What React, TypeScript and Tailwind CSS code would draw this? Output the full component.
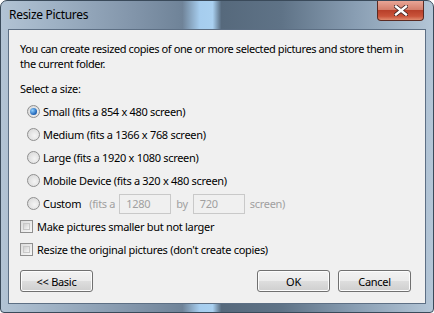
import React from 'react';

const font = { fontFamily: '"Noto Sans", "Segoe UI", sans-serif' };

function Radio({ checked, label, children }: { checked?: boolean; label: string; children?: React.ReactNode }) {
  return (
    <div className="flex items-center h-[23px] pl-[7px]">
      <span className="w-[13px] h-[13px] rounded-full border border-[#8f8f8f] bg-[radial-gradient(circle_at_60%_60%,#f4f4f4,#d4d4d4)] flex items-center justify-center">
        {checked && (
          <span className="w-[7px] h-[7px] rounded-full bg-[radial-gradient(circle_at_35%_35%,#8fd0ff,#1a5fb4_70%,#0d3a78)]" />
        )}
      </span>
      <span className="ml-[3px]">{label}</span>
      {children}
    </div>
  );
}

function Check({ label }: { label: string }) {
  return (
    <div className="flex items-center h-[23px]">
      <span className="w-[13px] h-[13px] border border-[#8f8f8f] bg-[linear-gradient(135deg,#dcdcdc,#f7f7f7)] p-[2px]">
        <span className="block w-full h-full border border-[#c8c8c8] bg-[linear-gradient(135deg,#d0d0d0,#f6f6f6)]" />
      </span>
      <span className="ml-[4px]">{label}</span>
    </div>
  );
}

function Button({ label, className }: { label: string; className?: string }) {
  return (
    <div
      className={
        'h-[22px] rounded-[3px] border border-[#707070] flex items-center justify-center bg-[linear-gradient(#f2f2f2_0%,#ebebeb_48%,#dddddd_52%,#cfcfcf_100%)] shadow-[inset_0_0_0_1px_#fcfcfc] ' +
        (className ?? '')
      }
    >
      {label}
    </div>
  );
}

export default function App() {
  return (
    <div className="w-[434px] h-[313px] bg-white tracking-[-0.3px]" style={font}>
      <div className="relative w-[434px] h-[313px] rounded-t-[7px] rounded-b-[4px] border border-[#3a4a5a] bg-[linear-gradient(90deg,#b2c3d4_0%,#9fb2c5_12%,#8396ab_30%,#6f8398_42%,#a6cdee_46%,#a9d0f0_49%,#56697c_51%,#5f7387_65%,#899eb3_82%,#b4c6d7_100%)] px-[7px] pb-[8px] flex flex-col">
        <div className="h-[28px] flex items-center pl-[1px] text-[12px] text-black">Resize Pictures</div>
        <div className="absolute right-[9px] top-0 w-[47px] h-[20px] rounded-b-[4px] border border-t-0 border-[#5a2a22] bg-[linear-gradient(#e8a596_0%,#d47f6c_45%,#b8402a_50%,#c9533a_80%,#e08a6e_100%)] flex items-center justify-center">
          <svg width="14" height="11" viewBox="0 0 14 11">
            <path d="M2 1.5 L12 9.5 M12 1.5 L2 9.5" stroke="#3a2020" strokeWidth="4" strokeLinecap="square" />
            <path d="M2 1.5 L12 9.5 M12 1.5 L2 9.5" stroke="#ffffff" strokeWidth="2.4" strokeLinecap="square" />
          </svg>
        </div>
        <div className="flex-1 border border-[#5d6f84] bg-[#f0f0f0] text-[11px] text-black pl-[11px] pr-[14px] pt-[11px] leading-[15px]">
          <p className="tracking-[-0.4px]">
            You can create resized copies of one or more selected pictures and store them in the current folder.
          </p>
          <div className="mt-[10px] mb-[4px]">Select a size:</div>
          <Radio checked label="Small (fits a 854 x 480 screen)" />
          <Radio label="Medium (fits a 1366 x 768 screen)" />
          <Radio label="Large (fits a 1920 x 1080 screen)" />
          <Radio label="Mobile Device (fits a 320 x 480 screen)" />
          <Radio label="Custom">
            <span className="ml-[8px] text-[#a0a0a0] flex items-center">
              (fits a
              <span className="ml-[4px] w-[52px] h-[20px] border border-[#c9c9c9] bg-[#f0f0f0] pl-[6px] flex items-center">1280</span>
              <span className="ml-[5px]">by</span>
              <span className="ml-[5px] w-[52px] h-[20px] border border-[#c9c9c9] bg-[#f0f0f0] pl-[6px] flex items-center">720</span>
              <span className="ml-[5px]">screen)</span>
            </span>
          </Radio>
          <Check label="Make pictures smaller but not larger" />
          <Check label="Resize the original pictures (don't create copies)" />
          <div className="flex items-center mt-[9px]">
            <Button label="<< Basic" className="w-[73px]" />
            <div className="flex-1" />
            <Button label="OK" className="w-[73px]" />
            <Button label="Cancel" className="w-[73px] ml-[8px]" />
          </div>
        </div>
      </div>
    </div>
  );
}
